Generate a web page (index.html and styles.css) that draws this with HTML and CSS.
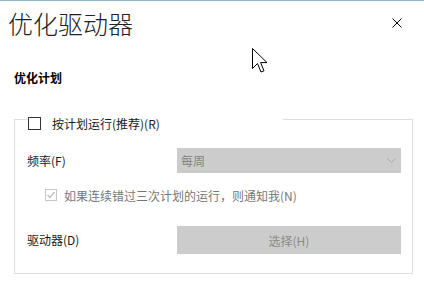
FILE: index.html
```html
<!DOCTYPE html>
<html lang="zh-CN">
<head>
<meta charset="utf-8">
<title>优化驱动器</title>
<link rel="stylesheet" href="styles.css">
</head>
<body>
<div class="window">
  <div class="header">
    <h1 class="title">优化驱动器</h1>
    <svg class="close" width="10" height="10" viewBox="0 0 10 10"><path d="M0.5 0.5 L9.5 9.5 M9.5 0.5 L0.5 9.5" stroke="#000" stroke-width="1" fill="none"/></svg>
  </div>
  <div class="section-label">优化计划</div>
  <div class="group">
    <div class="legend">
      <span class="checkbox"></span>
      <span class="text">按计划运行(推荐)(R)</span>
    </div>
    <div class="row row-freq">
      <span class="label">频率(F)</span>
      <div class="select">
        <span>每周</span>
        <svg width="9" height="5" viewBox="0 0 9 5"><path d="M0.5 0.5 L4.5 4.5 L8.5 0.5" stroke="#a8a8a8" stroke-width="1" fill="none"/></svg>
      </div>
    </div>
    <div class="notify">
      <span class="checkbox checked">
        <svg width="10" height="10" viewBox="0 0 10 10"><path d="M1.5 5 L4 7.5 L8.5 2" stroke="#bdbdbd" stroke-width="1.2" fill="none"/></svg>
      </span>
      <span class="text">如果连续错过三次计划的运行，则通知我(N)</span>
    </div>
    <div class="row row-drive">
      <span class="label">驱动器(D)</span>
      <div class="button">选择(H)</div>
    </div>
  </div>
  <svg class="cursor" width="18" height="27" viewBox="0 0 18 27"><path d="M0.5 0.5 L0.5 20.5 L5.5 15.5 L9 24 L12 22.8 L8.6 14.6 L15 14.6 Z" fill="#fff" stroke="#000" stroke-width="1" stroke-linejoin="miter"/></svg>
</div>
</body>
</html>
```

FILE: styles.css
```css
* { box-sizing: border-box; }
html, body { margin: 0; padding: 0; }
body {
  width: 424px;
  height: 281px;
  background: #fff;
  font-family: "Noto Sans CJK SC", "Noto Sans", sans-serif;
  font-size: 12px;
  color: #1a1a1a;
  overflow: hidden;
}
.window {
  position: relative;
  height: 281px;
  border-top: 1px solid #8fb9cc;
}
.header {
  display: flex;
  justify-content: space-between;
  align-items: flex-start;
  padding: 10px 22px 0 8px;
}
.title {
  margin: 0;
  font-size: 25px;
  line-height: 25px;
  font-weight: 300;
  color: #222;
}
.close { margin-top: 7px; display: block; }
.section-label {
  margin: 36px 0 0 14px;
  font-weight: 700;
  line-height: 12px;
  color: #000;
}
.group {
  margin: 35px 0 0 14px;
  width: 399px;
  border: 1px solid #dedede;
  padding: 0 11px 19px 12px;
}
.legend {
  display: flex;
  align-items: center;
  height: 13px;
  width: 255px;
  margin: -3px 0 0 1px;
  background: #fff;
  line-height: 13px;
}
.checkbox {
  width: 13px;
  height: 13px;
  border: 1px solid #333;
  background: #fff;
  flex: none;
}
.legend .text { margin-left: 11px; }
.row {
  display: grid;
  grid-template-columns: 150px 1fr;
  align-items: center;
}
.row-freq { margin-top: 18px; }
.label { line-height: 12px; }
.select {
  height: 25px;
  background: #cccccc;
  display: flex;
  align-items: center;
  justify-content: space-between;
  padding: 0 5px 0 4px;
  color: #828282;
}
.notify {
  display: flex;
  align-items: center;
  margin: 15px 0 0 18px;
  height: 14px;
}
.checkbox.checked {
  width: 12px;
  height: 12px;
  border-color: #c6c6c6;
  display: flex;
  align-items: center;
  justify-content: center;
}
.notify .text { margin-left: 7px; color: #777; }
.row-drive { margin-top: 24px; }
.button {
  height: 28px;
  background: #cccccc;
  color: #8a8a8a;
  display: flex;
  align-items: center;
  justify-content: center;
}
.cursor {
  position: absolute;
  left: 252px;
  top: 47px;
}
```
